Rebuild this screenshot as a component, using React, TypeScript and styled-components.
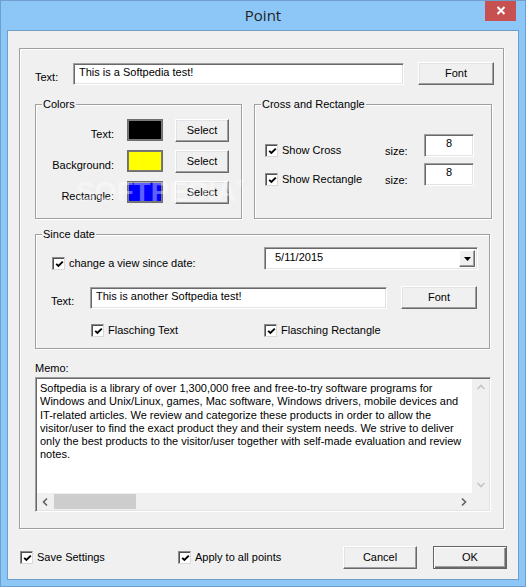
import styled, { createGlobalStyle, css } from 'styled-components';

const memoLines = [
  'Softpedia is a library of over 1,300,000 free and free-to-try software programs for',
  'Windows and Unix/Linux, games, Mac software, Windows drivers, mobile devices and',
  'IT-related articles. We review and categorize these products in order to allow the',
  'visitor/user to find the exact product they and their system needs. We strive to deliver',
  'only the best products to the visitor/user together with self-made evaluation and review',
  'notes.',
];

const GlobalStyle = createGlobalStyle`
  html, body {
    margin: 0;
    padding: 0;
    background: #8cc7f7;
  }
  body {
    font-family: "Liberation Sans", Arial, sans-serif;
    font-size: 11px;
    color: #000;
  }
  * {
    box-sizing: border-box;
  }
`;

const Check = () => (
  <CheckBox>
    <svg width="9" height="9" viewBox="0 0 9 9">
      <polyline points="1.2,3.8 3.4,6 7.8,1.6" fill="none" stroke="#000" strokeWidth="1.9" />
    </svg>
  </CheckBox>
);

const Chevron = ({ dir, color }: { dir: 'up' | 'down' | 'left' | 'right'; color: string }) => {
  const d = {
    up: 'M1.5 6 L5 2.5 L8.5 6',
    down: 'M1.5 3 L5 6.5 L8.5 3',
    left: 'M6 1.5 L2.5 5 L6 8.5',
    right: 'M3 1.5 L6.5 5 L3 8.5',
  }[dir];
  return (
    <svg width="10" height="10" viewBox="0 0 10 10">
      <path d={d} fill="none" stroke={color} strokeWidth="1.6" />
    </svg>
  );
};

const App = () => {
  return (
    <>
      <GlobalStyle />
      <Window>
        <TitleBar>
          <span />
          <Title>Point</Title>
          <CloseButton>
            <svg width="10" height="9" viewBox="0 0 10 9">
              <path d="M1.5 1 L8.5 8 M8.5 1 L1.5 8" stroke="#fff" strokeWidth="2" />
            </svg>
          </CloseButton>
        </TitleBar>

        <Client>
          <Panel>
            <TextRow>
              <RowLabel $w={38}>Text:</RowLabel>
              <TextInput $w={331} readOnly value="This is a Softpedia test!" />
              <Button $w={76} $ml={14}>Font</Button>
            </TextRow>

            <GroupsRow>
              <GroupBox $w={207}>
                <Legend>Colors</Legend>
                <ColorGrid>
                  <ColorLabel>Text:</ColorLabel>
                  <Swatch $color="#000000" />
                  <Button $w={54}>Select</Button>
                  <ColorLabel>Background:</ColorLabel>
                  <Swatch $color="#ffff00" />
                  <Button $w={54}>Select</Button>
                  <ColorLabel>Rectangle:</ColorLabel>
                  <Swatch $color="#0000ff" />
                  <Button $w={54}>Select</Button>
                </ColorGrid>
              </GroupBox>

              <GroupBox $w={238}>
                <Legend>Cross and Rectangle</Legend>
                <CrossGrid>
                  <CheckItem>
                    <Check />
                    Show Cross
                  </CheckItem>
                  <SizeLabel>size:</SizeLabel>
                  <SizeInput readOnly value="8" />
                  <CheckItem>
                    <Check />
                    Show Rectangle
                  </CheckItem>
                  <SizeLabel>size:</SizeLabel>
                  <SizeInput readOnly value="8" />
                </CrossGrid>
              </GroupBox>
            </GroupsRow>

            <SinceGroup>
              <Legend>Since date</Legend>
              <SinceRow $mt={12}>
                <CheckItem $w={212} $ml={1}>
                  <Check />
                  change a view since date:
                </CheckItem>
                <Combo>
                  <ComboValue>5/11/2015</ComboValue>
                  <ComboButton>
                    <svg width="7" height="4" viewBox="0 0 7 4">
                      <path d="M0 0 H7 L3.5 4 Z" fill="#000" />
                    </svg>
                  </ComboButton>
                </Combo>
              </SinceRow>
              <SinceRow $mt={16}>
                <RowLabel $w={39}>Text:</RowLabel>
                <TextInput $w={297} readOnly value="This is another Softpedia test!" />
                <Button $w={76} $ml={14}>Font</Button>
              </SinceRow>
              <SinceRow $mt={15}>
                <CheckItem $w={173} $ml={40}>
                  <Check />
                  Flasching Text
                </CheckItem>
                <CheckItem>
                  <Check />
                  Flasching Rectangle
                </CheckItem>
              </SinceRow>
            </SinceGroup>

            <MemoLabel>Memo:</MemoLabel>
            <MemoBox>
              <MemoText>{memoLines.join('\n')}</MemoText>
              <VScroll>
                <ArrowCell>
                  <Chevron dir="up" color="#c4c4c4" />
                </ArrowCell>
                <ArrowCell>
                  <Chevron dir="down" color="#c4c4c4" />
                </ArrowCell>
              </VScroll>
              <HScroll>
                <ArrowCell>
                  <Chevron dir="left" color="#606060" />
                </ArrowCell>
                <Track>
                  <Thumb />
                </Track>
                <ArrowCell>
                  <Chevron dir="right" color="#606060" />
                </ArrowCell>
              </HScroll>
              <Corner />
            </MemoBox>
          </Panel>

          <BottomRow>
            <CheckItem $w={158} $ml={12}>
              <Check />
              Save Settings
            </CheckItem>
            <CheckItem>
              <Check />
              Apply to all points
            </CheckItem>
            <Button $w={74} $ml="auto">Cancel</Button>
            <Button $w={74} $ml={16} $default>OK</Button>
          </BottomRow>

          <Watermark aria-hidden="true">
            SOFTPEDIA<sup>®</sup>
          </Watermark>
        </Client>
      </Window>
    </>
  );
};

const Window = styled.div`
  width: 526px;
  height: 587px;
  background: #8cc7f7;
  border: 1px solid #6f9fcc;
  display: flex;
  flex-direction: column;
  overflow: hidden;
`;

const TitleBar = styled.div`
  height: 29px;
  display: grid;
  grid-template-columns: 1fr auto 1fr;
  align-items: center;
`;

const Title = styled.div`
  font-family: "Open Sans", "Noto Sans", sans-serif;
  font-size: 15px;
  color: #1f1f1f;
  margin-top: -1px;
`;

const CloseButton = styled.div`
  justify-self: end;
  align-self: start;
  margin-top: -1px;
  margin-right: 9px;
  width: 31px;
  height: 21px;
  background: #c75050;
  display: flex;
  align-items: center;
  justify-content: center;
`;

const Client = styled.div`
  position: relative;
  margin: 0 6px;
  height: 550px;
  background: #f0f0f0;
  border: 1px solid #6d9dcb;
`;

const Panel = styled.div`
  margin: 17px 0 0 11px;
  width: 485px;
  height: 481px;
  border: 1px solid #a0a0a0;
  box-shadow: 1px 1px 0 #fff, inset 1px 1px 0 #fff;
  padding: 0 9px 0 15px;
  display: flex;
  flex-direction: column;
`;

const TextRow = styled.div`
  margin-top: 13px;
  height: 23px;
  display: flex;
  align-items: center;
`;

const RowLabel = styled.span<{ $w: number }>`
  width: ${(p) => p.$w}px;
  align-self: flex-end;
  line-height: 13px;
  padding-bottom: 1px;
`;

const sunken = css`
  background: #fff;
  border: 1px solid;
  border-color: #a0a0a0 #fff #fff #a0a0a0;
  box-shadow: inset 1px 1px 0 #696969, inset -1px -1px 0 #e3e3e3;
`;

const TextInput = styled.input<{ $w: number }>`
  ${sunken};
  width: ${(p) => p.$w}px;
  height: 22px;
  padding: 0 4px 3px 5px;
  font: 11px "Liberation Sans", Arial, sans-serif;
  color: #000;
  outline: none;
`;

const Button = styled.button<{ $w: number; $ml?: number | 'auto'; $default?: boolean }>`
  width: ${(p) => p.$w}px;
  height: 23px;
  margin-left: ${(p) => (p.$ml === 'auto' ? 'auto' : `${p.$ml ?? 0}px`)};
  padding: 0 0 1px;
  font: 11px "Liberation Sans", Arial, sans-serif;
  color: #000;
  background: #f0f0f0;
  border: 1px solid;
  border-color: #fff #696969 #696969 #fff;
  box-shadow: inset -1px -1px 0 #a0a0a0, inset 1px 1px 0 #e3e3e3;
  flex-shrink: 0;

  ${(p) =>
    p.$default &&
    css`
      border-color: #646464;
      box-shadow: inset 1px 1px 0 #fff, inset -1px -1px 0 #696969, inset -2px -2px 0 #a0a0a0;
    `}
`;

const GroupsRow = styled.div`
  margin-top: 19px;
  display: flex;
  gap: 12px;
`;

const groupBorder = css`
  position: relative;
  border: 1px solid #a0a0a0;
  box-shadow: 1px 1px 0 #fff, inset 1px 1px 0 #fff;
`;

const GroupBox = styled.div<{ $w: number }>`
  ${groupBorder};
  width: ${(p) => p.$w}px;
  height: 115px;
`;

const Legend = styled.span`
  position: absolute;
  top: -7px;
  left: 6px;
  padding: 0 1px;
  line-height: 13px;
  background: #f0f0f0;
`;

const ColorGrid = styled.div`
  margin-top: 14px;
  display: grid;
  grid-template-columns: 78px 36px 54px;
  grid-auto-rows: 23px;
  column-gap: 13px;
  row-gap: 8px;
  & > button {
    margin-left: -1px;
  }
`;

const ColorLabel = styled.span`
  align-self: end;
  text-align: right;
  line-height: 13px;
  padding-bottom: 1px;
`;

const Swatch = styled.div<{ $color: string }>`
  width: 36px;
  height: 22px;
  background: ${(p) => p.$color};
  border: 1px solid #6e6e6e;
  box-shadow: inset 0 0 0 1px #7a7a7a;
`;

const CrossGrid = styled.div`
  margin: 29px 0 0 10px;
  display: grid;
  grid-template-columns: 120px 39px 50px;
  grid-auto-rows: 23px;
  row-gap: 6px;
`;

const CheckItem = styled.label<{ $w?: number; $ml?: number }>`
  display: flex;
  align-items: center;
  gap: 4px;
  line-height: 13px;
  white-space: nowrap;
  ${(p) => p.$w && `width: ${p.$w}px;`}
  ${(p) => p.$ml && `margin-left: ${p.$ml}px;`}
  flex-shrink: 0;

  ${CrossGrid} & {
    align-self: end;
    margin-bottom: 0;
  }
`;

const CheckBox = styled.span`
  width: 13px;
  height: 13px;
  background: #fff;
  border: 1px solid;
  border-color: #8a8a8a #d8d8d8 #d8d8d8 #8a8a8a;
  box-shadow: inset 1px 1px 0 #505050;
  display: inline-flex;
  align-items: center;
  justify-content: center;
  flex-shrink: 0;
  padding: 1px 0 0 1px;
`;

const SizeLabel = styled.span`
  align-self: end;
  line-height: 13px;
  margin-bottom: -1px;
`;

const SizeInput = styled.input`
  ${sunken};
  width: 50px;
  height: 23px;
  padding: 0 0 6px;
  text-align: center;
  font: 11px "Liberation Sans", Arial, sans-serif;
  color: #000;
  outline: none;
`;

const SinceGroup = styled.div`
  ${groupBorder};
  margin-top: 15px;
  width: 455px;
  height: 115px;
  padding-left: 15px;
`;

const SinceRow = styled.div<{ $mt: number }>`
  margin-top: ${(p) => p.$mt}px;
  display: flex;
  align-items: center;
  & > ${CheckItem} {
    align-self: flex-end;
  }
`;

const Combo = styled.div`
  ${sunken};
  width: 214px;
  height: 23px;
  display: flex;
  align-items: stretch;
  padding: 2px;
`;

const ComboValue = styled.span`
  flex: 1;
  padding: 1px 0 0 8px;
  line-height: 13px;
`;

const ComboButton = styled.span`
  width: 16px;
  background: #f0f0f0;
  border: 1px solid;
  border-color: #fff #696969 #696969 #fff;
  box-shadow: inset -1px -1px 0 #a0a0a0;
  display: flex;
  align-items: center;
  justify-content: center;
`;

const MemoLabel = styled.div`
  margin-top: 13px;
  line-height: 13px;
`;

const MemoBox = styled.div`
  ${sunken};
  margin-top: 2px;
  width: 456px;
  height: 135px;
  padding: 1px;
  display: grid;
  grid-template-columns: 1fr 17px;
  grid-template-rows: 1fr 17px;
`;

const MemoText = styled.div`
  background: #fff;
  padding: 3px 3px 0;
  line-height: 13.3px;
  white-space: pre;
  overflow: hidden;
`;

const VScroll = styled.div`
  background: #f0f0f0;
  display: flex;
  flex-direction: column;
  justify-content: space-between;
`;

const HScroll = styled.div`
  background: #f0f0f0;
  display: flex;
`;

const ArrowCell = styled.div`
  width: 17px;
  height: 17px;
  display: flex;
  align-items: center;
  justify-content: center;
  flex-shrink: 0;
`;

const Track = styled.div`
  flex: 1;
  padding: 1px 0;
`;

const Thumb = styled.div`
  width: 82px;
  height: 15px;
  background: #cdcdcd;
`;

const Corner = styled.div`
  background: #f0f0f0;
`;

const BottomRow = styled.div`
  margin-top: 17px;
  height: 23px;
  padding-right: 11px;
  display: flex;
  align-items: center;
`;

const Watermark = styled.div`
  position: absolute;
  left: 68px;
  top: 145px;
  font: bold 28px "Liberation Sans", Arial, sans-serif;
  color: rgba(255, 255, 255, 0.4);
  pointer-events: none;

  sup {
    font-size: 10px;
    vertical-align: 14px;
  }
`;

export default App;
